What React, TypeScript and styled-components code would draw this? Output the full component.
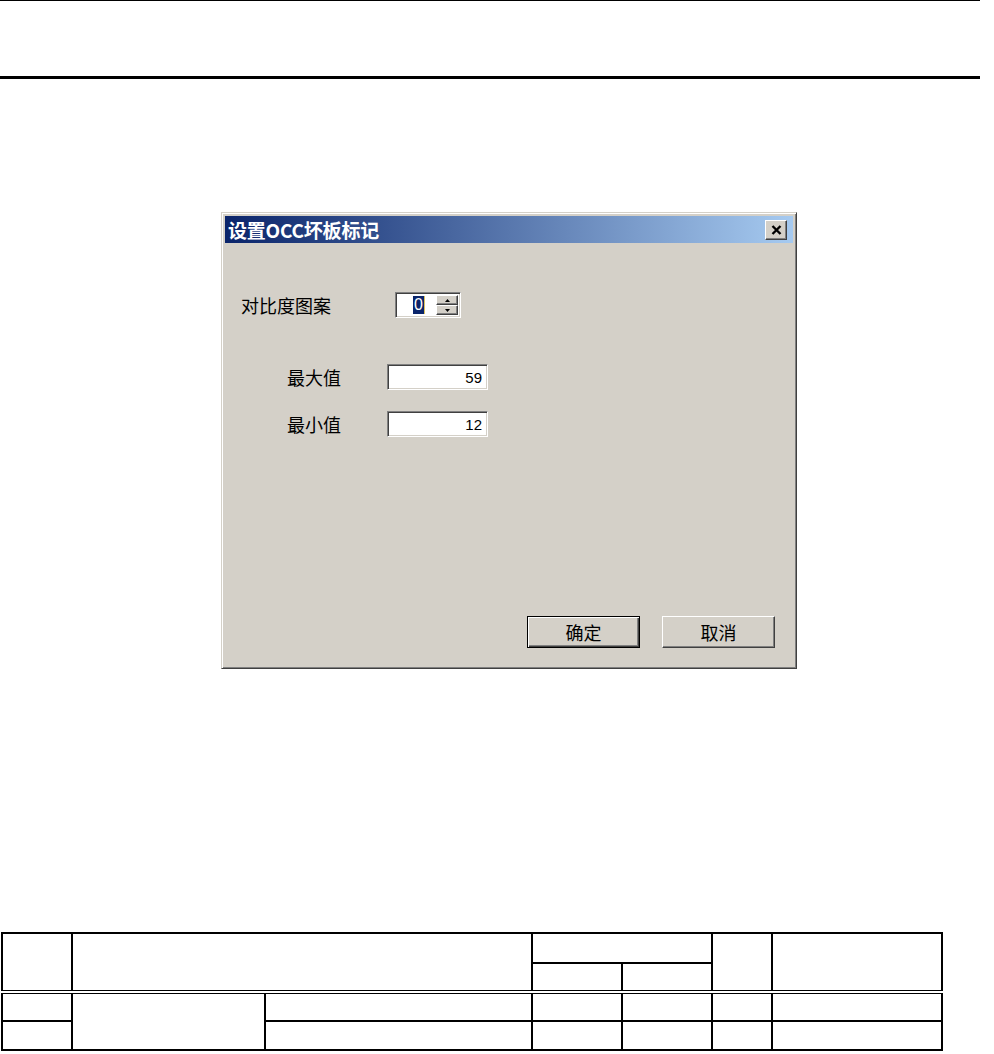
import React from "react";
import styled, { createGlobalStyle } from "styled-components";

const GlobalStyle = createGlobalStyle`
  html, body {
    margin: 0;
    padding: 0;
    background: #fff;
  }
  body {
    font-family: "Noto Sans CJK SC", "Liberation Sans", sans-serif;
    color: #000;
  }
`;

const Page = styled.div`
  width: 994px;
  min-height: 1054px;
  overflow: hidden;
`;

const HeaderBand = styled.div`
  width: 980px;
  height: 75px;
  border-top: 1px solid #000;
  border-bottom: 3px solid #000;
`;

const Dialog = styled.div`
  margin: 133px 0 0 221px;
  width: 576px;
  height: 457px;
  box-sizing: border-box;
  background: #d4d0c8;
  border: 1px solid;
  border-color: #d4d0c8 #404040 #404040 #d4d0c8;
  box-shadow: inset 1px 1px #fff, inset -1px -1px #808080;
  padding: 3px;
  display: flex;
  flex-direction: column;
`;

const TitleBar = styled.div`
  height: 27px;
  display: flex;
  align-items: center;
  justify-content: space-between;
  padding: 0 6px 0 3px;
  background: linear-gradient(to right, #0a246a, #a6caf0);
`;

const TitleText = styled.span`
  color: #fff;
  font-weight: bold;
  font-size: 19px;
  line-height: 1;
  letter-spacing: -0.2px;
`;

const CloseButton = styled.div`
  width: 22px;
  height: 20px;
  box-sizing: border-box;
  background: #d4d0c8;
  border: 1px solid;
  border-color: #fff #404040 #404040 #fff;
  box-shadow: inset -1px -1px #808080;
  display: flex;
  align-items: center;
  justify-content: center;
`;

const Client = styled.div`
  flex: 1;
  display: flex;
  flex-direction: column;
`;

const FormRow = styled.div<{ $top: number; $indent: number; $label: number }>`
  display: flex;
  align-items: center;
  margin-top: ${(p) => p.$top}px;
  padding-left: ${(p) => p.$indent}px;

  & > label {
    width: ${(p) => p.$label}px;
    font-size: 18px;
    line-height: 1;
  }
`;

const Sunken = styled.div`
  box-sizing: border-box;
  height: 26px;
  background: #fff;
  border: 1px solid;
  border-color: #808080 #fff #fff #808080;
  box-shadow: inset 1px 1px #404040, inset -1px -1px #d4d0c8;
`;

const Spinner = styled(Sunken)`
  width: 66px;
  display: flex;
  padding: 2px;
`;

const SpinText = styled.div`
  flex: 1;
  display: flex;
  align-items: center;
  padding-left: 15px;
`;

const Selected = styled.span`
  background: #0a246a;
  color: #fff;
  font-family: "Liberation Sans", sans-serif;
  font-size: 16px;
  line-height: 18px;
  padding: 0 1px;
  border-right: 1px solid #d8c060;
`;

const SpinButtons = styled.div`
  width: 22px;
  display: flex;
  flex-direction: column;
`;

const SpinButton = styled.div`
  flex: 1;
  box-sizing: border-box;
  background: #d4d0c8;
  border: 1px solid;
  border-color: #fff #404040 #404040 #fff;
  box-shadow: inset -1px -1px #808080;
  display: flex;
  align-items: center;
  justify-content: center;
`;

const NumberField = styled(Sunken)`
  width: 101px;
  display: flex;
  align-items: center;
  justify-content: flex-end;
  padding-right: 5px;
  font-family: "Liberation Sans", sans-serif;
  font-size: 15px;
`;

const ButtonRow = styled.div`
  margin-top: auto;
  margin-bottom: 17px;
  padding-right: 18px;
  display: flex;
  justify-content: flex-end;
  gap: 22px;
`;

const DlgButton = styled.button<{ $default?: boolean }>`
  width: 113px;
  height: 32px;
  padding: 0;
  box-sizing: border-box;
  background: #d4d0c8;
  font-family: "Noto Sans CJK SC", sans-serif;
  font-size: 18px;
  color: #000;
  border: 1px solid;
  border-color: ${(p) => (p.$default ? "#000" : "#fff #404040 #404040 #fff")};
  box-shadow: ${(p) =>
    p.$default
      ? "inset 1px 1px #fff, inset -1px -1px #404040, inset -2px -2px #808080"
      : "inset -1px -1px #808080"};
`;

const Grid = styled.table`
  margin: 263px 0 0 1px;
  width: 940px;
  border-collapse: collapse;
  table-layout: fixed;
`;

const Cell = styled.td<{ $h?: number; $double?: boolean }>`
  border: 2px solid #000;
  ${(p) => (p.$double ? "border-top: 4px double #000;" : "")}
  height: ${(p) => p.$h ?? 26}px;
  padding: 0;
`;

const Arrow = ({ up }: { up?: boolean }) => (
  <svg width="5" height="3" viewBox="0 0 5 3">
    <path d={up ? "M2.5 0L5 3H0z" : "M0 0h5L2.5 3z"} fill="#000" />
  </svg>
);

const App = () => {
  const widths = [70, 193, 267, 90, 90, 60, 170];
  return (
    <Page>
      <GlobalStyle />
      <HeaderBand />

      <Dialog>
        <TitleBar>
          <TitleText>设置OCC坏板标记</TitleText>
          <CloseButton>
            <svg width="11" height="10" viewBox="0 0 11 10">
              <path d="M1.5 1l8 8M9.5 1l-8 8" stroke="#000" strokeWidth="2.4" />
            </svg>
          </CloseButton>
        </TitleBar>
        <Client>
          <FormRow $top={49} $indent={16} $label={154}>
            <label>对比度图案</label>
            <Spinner>
              <SpinText>
                <Selected>0</Selected>
              </SpinText>
              <SpinButtons>
                <SpinButton>
                  <Arrow up />
                </SpinButton>
                <SpinButton>
                  <Arrow />
                </SpinButton>
              </SpinButtons>
            </Spinner>
          </FormRow>
          <FormRow $top={46} $indent={62} $label={100}>
            <label>最大值</label>
            <NumberField>59</NumberField>
          </FormRow>
          <FormRow $top={21} $indent={62} $label={100}>
            <label>最小值</label>
            <NumberField>12</NumberField>
          </FormRow>
          <ButtonRow>
            <DlgButton $default>确定</DlgButton>
            <DlgButton>取消</DlgButton>
          </ButtonRow>
        </Client>
      </Dialog>

      <Grid>
        <colgroup>
          {widths.map((w, i) => (
            <col key={i} style={{ width: w }} />
          ))}
        </colgroup>
        <tbody>
          <tr>
            <Cell rowSpan={2} />
            <Cell rowSpan={2} colSpan={2} />
            <Cell colSpan={2} $h={28} />
            <Cell rowSpan={2} />
            <Cell rowSpan={2} />
          </tr>
          <tr>
            <Cell $h={26} />
            <Cell $h={26} />
          </tr>
          <tr>
            <Cell $double />
            <Cell $double rowSpan={2} />
            <Cell $double />
            <Cell $double />
            <Cell $double />
            <Cell $double />
            <Cell $double />
          </tr>
          <tr>
            <Cell />
            <Cell />
            <Cell />
            <Cell />
            <Cell />
            <Cell $h={27} />
          </tr>
        </tbody>
      </Grid>
    </Page>
  );
};

export default App;
